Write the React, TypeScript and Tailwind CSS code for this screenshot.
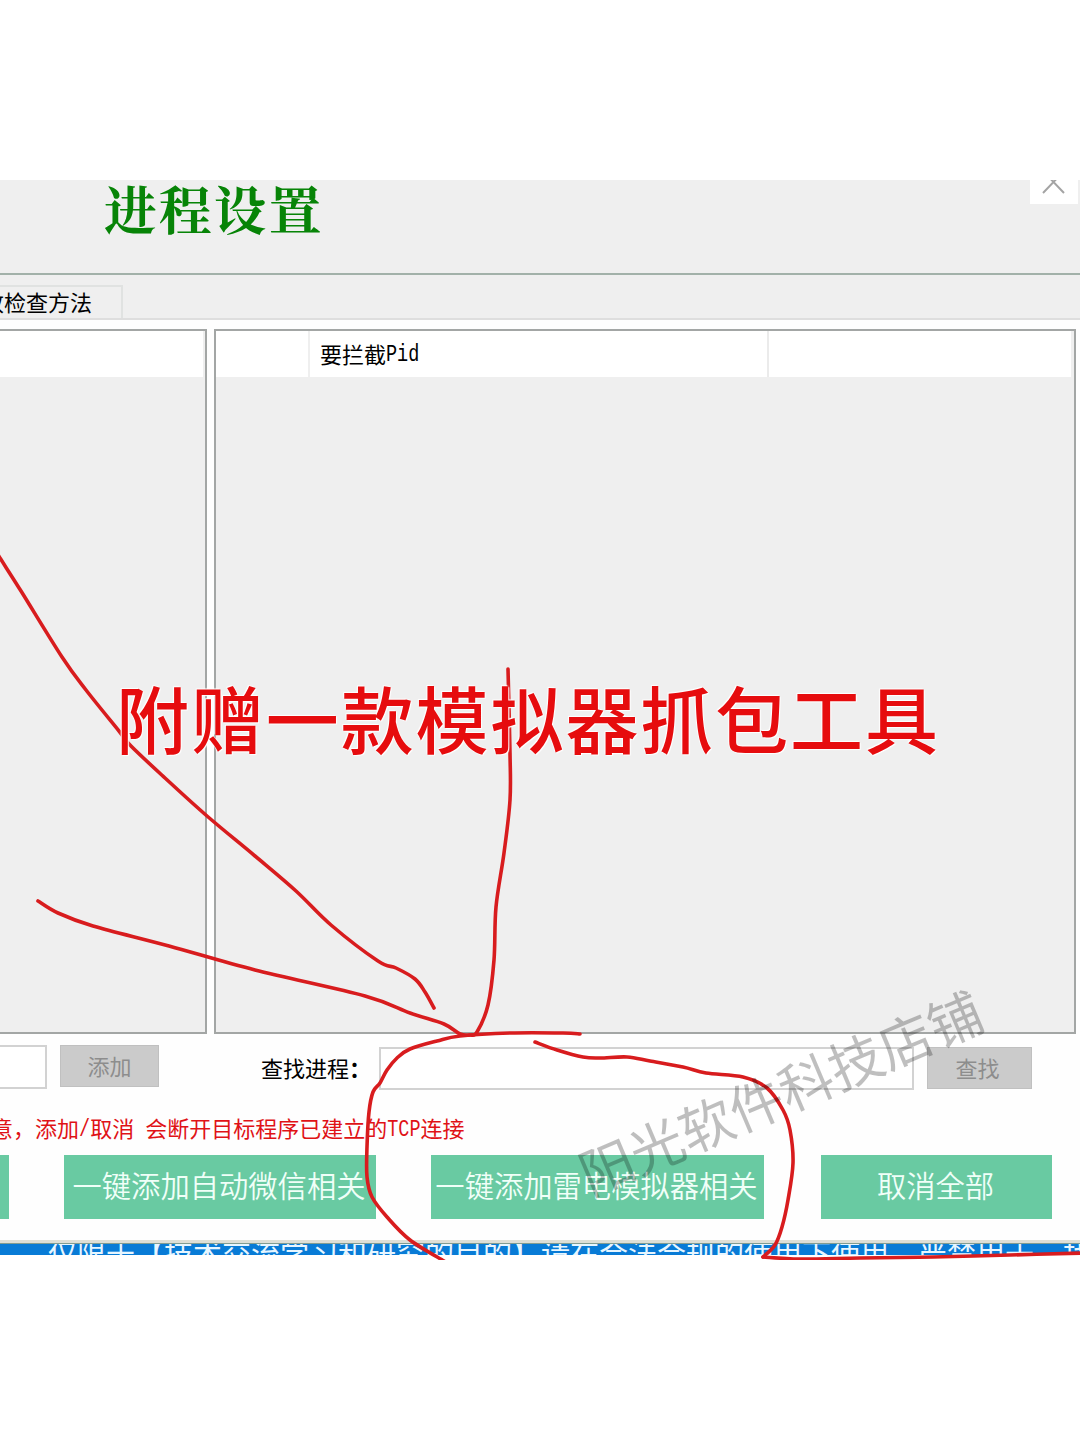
import type { ReactNode } from "react";

type Point = [number, number];

// Hand-drawn pen strokes that lie over the dialog
const STROKES: Point[][] = [
  [
    [-4, 551], [0, 558], [21, 591], [62, 657], [86, 690], [119, 731], [131, 746], [165, 778],
    [207, 816], [255, 856], [296, 891], [331, 925], [378, 961], [396, 968],
    [415, 979], [425, 992], [434, 1008],
  ],
  [
    [38, 901], [58, 913], [93, 926], [169, 946], [255, 970], [365, 996],
    [410, 1013], [444, 1024], [460, 1034], [470, 1035], [477, 1032], [488, 1005],
    [494, 960], [496, 907], [504, 853], [510, 800], [510, 753], [508, 669],
  ],
  [
    [580, 1034], [563, 1033], [510, 1033], [460, 1036], [437, 1041], [410, 1049],
    [397, 1058], [387, 1070], [380, 1083], [373, 1092], [369, 1112], [367, 1147],
    [367, 1177], [372, 1197], [387, 1217], [410, 1240], [444, 1261],
  ],
  [
    [535, 1042], [557, 1050], [583, 1057], [600, 1058], [627, 1057], [650, 1061],
    [683, 1067], [706, 1073], [743, 1077], [767, 1088], [783, 1110], [790, 1130],
    [793, 1163], [788, 1200], [782, 1227], [775, 1245], [763, 1257],
  ],
  [[763, 1257], [800, 1259], [860, 1258], [933, 1257], [1010, 1255], [1084, 1253]],
];

function toPath(points: Point[]) {
  let d = `M${points[0][0]},${points[0][1]}`;
  for (let i = 0; i < points.length - 1; i++) {
    const p0 = points[i - 1] ?? points[i];
    const p1 = points[i];
    const p2 = points[i + 1];
    const p3 = points[i + 2] ?? p2;
    d += ` C${p1[0] + (p2[0] - p0[0]) / 6},${p1[1] + (p2[1] - p0[1]) / 6}`;
    d += ` ${p2[0] - (p3[0] - p1[0]) / 6},${p2[1] - (p3[1] - p1[1]) / 6}`;
    d += ` ${p2[0]},${p2[1]}`;
  }
  return d;
}

function Mono({ children }: { children: ReactNode }) {
  return (
    <span className="scale-y-[1.25] pt-1.5 font-['Liberation_Mono',monospace] text-[18.5px] leading-none">
      {children}
    </span>
  );
}

function GreenButton({
  className,
  children,
}: {
  className: string;
  children: ReactNode;
}) {
  return (
    <button
      className={`flex h-16 shrink-0 items-center justify-center bg-[#69caa2] pr-0.5 pb-[5px] text-[29.3px] leading-none font-[350] whitespace-nowrap text-[#f0fff8] ${className}`}
    >
      {children}
    </button>
  );
}

function Lists() {
  return (
    <div className="flex h-[705px] gap-[7px]">
      <div className="w-[207px] border-2 border-l-0 border-[#a3a6a5] bg-[#efefef]">
        <div className="mr-0.5 h-[46px] bg-white" />
      </div>
      <div className="w-[862px] border-2 border-[#a3a6a5] bg-[#efefef]">
        <div className="mr-[3px] flex h-[46px] bg-white text-[22px] leading-none text-black">
          <div className="w-[94px] border-r-2 border-[#efefef]" />
          <div className="flex w-[459px] items-center border-r-2 border-[#ebebeb] pb-[3px] pl-[10px]">
            要拦截<Mono>Pid</Mono>
          </div>
        </div>
      </div>
    </div>
  );
}

function SearchRow() {
  return (
    <div className="mt-[11px] flex h-[43px] items-start text-[22px] leading-none">
      <div className="h-[44px] w-[47px] border-2 border-l-0 border-[#d2d2d2] bg-white" />
      <button className="ml-[13px] flex h-[42px] w-[99px] items-center justify-center border border-[#c0c0c0] bg-[#cbcbcb] pb-0.5 text-[#8d8d8d]">
        添加
      </button>
      <label className="ml-[102px] flex h-[46px] w-[118px] items-center pb-[3px] whitespace-nowrap text-black">
        查找进程<span className="font-bold">：</span>
      </label>
      <div className="mt-0.5 h-[43px] w-[535px] border-2 border-[#d2d2d2] bg-white" />
      <button className="mt-0.5 ml-[13px] flex h-[42px] w-[105px] items-center justify-center border border-[#c0c0c0] bg-[#cbcbcb] pr-1 pb-0.5 text-[#8d8d8d]">
        查找
      </button>
    </div>
  );
}

export default function App() {
  return (
    <div className="relative h-[1440px] w-[1080px] overflow-hidden bg-white pt-[180px] font-['Noto_Sans_CJK_SC',sans-serif]">
      <div className="flex h-[1080px] flex-col overflow-hidden bg-[#fefefe]">
        <header className="flex h-[95px] shrink-0 items-start justify-between border-b-2 border-[#a2b1a9] bg-[#efefef] pl-[104px]">
          <h1 className="mt-[5px] font-['Liberation_Serif','Noto_Serif_CJK_SC','Noto_Sans_CJK_SC',serif] text-[52.5px] leading-[54px] font-bold tracking-[2.4px] text-[#078407]">
            进程设置
          </h1>
          <div className="mr-[2px] h-6 w-12 bg-white">
            <svg
              className="h-6 w-12"
              viewBox="0 0 48 24"
              fill="none"
              stroke="#a4a4a4"
              strokeWidth={2}
            >
              <path d="M13 13L35 -10M12 -10L34 13" />
            </svg>
          </div>
        </header>

        <div className="h-[45px] shrink-0 border-b-2 border-[#dedede] bg-[#efefef] pt-[10px]">
          <div className="flex h-[33px] w-[123px] items-center justify-end border-t-2 border-r-2 border-[#e0e2e1] pr-[29px] pb-1 text-[22px] leading-none whitespace-nowrap text-black">
            改检查方法
          </div>
        </div>

        <main className="h-[920px] shrink-0 pt-[9px]">
          <Lists />
          <SearchRow />
          <p className="mt-[26px] ml-[-9px] flex h-8 items-center pb-[6px] text-[22px] leading-none whitespace-pre text-[#e01216]">
            意，添加<Mono>/</Mono>取消<Mono> </Mono>会断开目标程序已建立的
            <Mono>TCP</Mono>连接
          </p>
          <div className="mt-[9px] flex">
            <GreenButton className="w-[9px]">{null}</GreenButton>
            <GreenButton className="ml-[55px] w-[312px]">
              一键添加自动微信相关
            </GreenButton>
            <GreenButton className="ml-[55px] w-[333px]">
              一键添加雷电模拟器相关
            </GreenButton>
            <GreenButton className="ml-[57px] w-[231px]">取消全部</GreenButton>
          </div>
        </main>

        <div className="h-[4px] shrink-0 border-b border-[#819c91] bg-[#dedfd6]" />
        <div className="h-[11px] shrink-0 overflow-hidden bg-[#087bd6] pl-[48px] text-[29px] leading-[17px] whitespace-nowrap text-[#e7f6ff]">
          仅限于【技术交流学习和研究的目的】请在合法合规的使用下使用，严禁用于，找
        </div>
        <div className="h-[5px] shrink-0 bg-white" />
      </div>

      {/* Pen marks */}
      <svg
        className="pointer-events-none absolute top-0 left-0 h-[1260px] w-[1080px]"
        viewBox="0 0 1080 1260"
        fill="none"
        stroke="#d81c1e"
        strokeWidth={3.6}
        strokeLinecap="round"
        strokeLinejoin="round"
      >
        {STROKES.map((points, i) => (
          <path key={i} d={toPath(points)} />
        ))}
      </svg>

      {/* Shop watermark */}
      <div className="pointer-events-none absolute top-[1056px] left-[560px] w-[440px] rotate-[-23deg] text-center text-[54px] leading-[70px] whitespace-nowrap text-black/25">
        阳光软件科技店铺
      </div>

      {/* Caption */}
      <div className="pointer-events-none absolute top-[671px] left-[116px] text-[73px] leading-[90px] font-medium tracking-[1.9px] whitespace-nowrap text-[#e60c0e] [text-shadow:0_0_2px_#fff,1px_1px_1px_#fff,-1px_-1px_1px_#fff]">
        附赠一款模拟器抓包工具
      </div>
    </div>
  );
}
